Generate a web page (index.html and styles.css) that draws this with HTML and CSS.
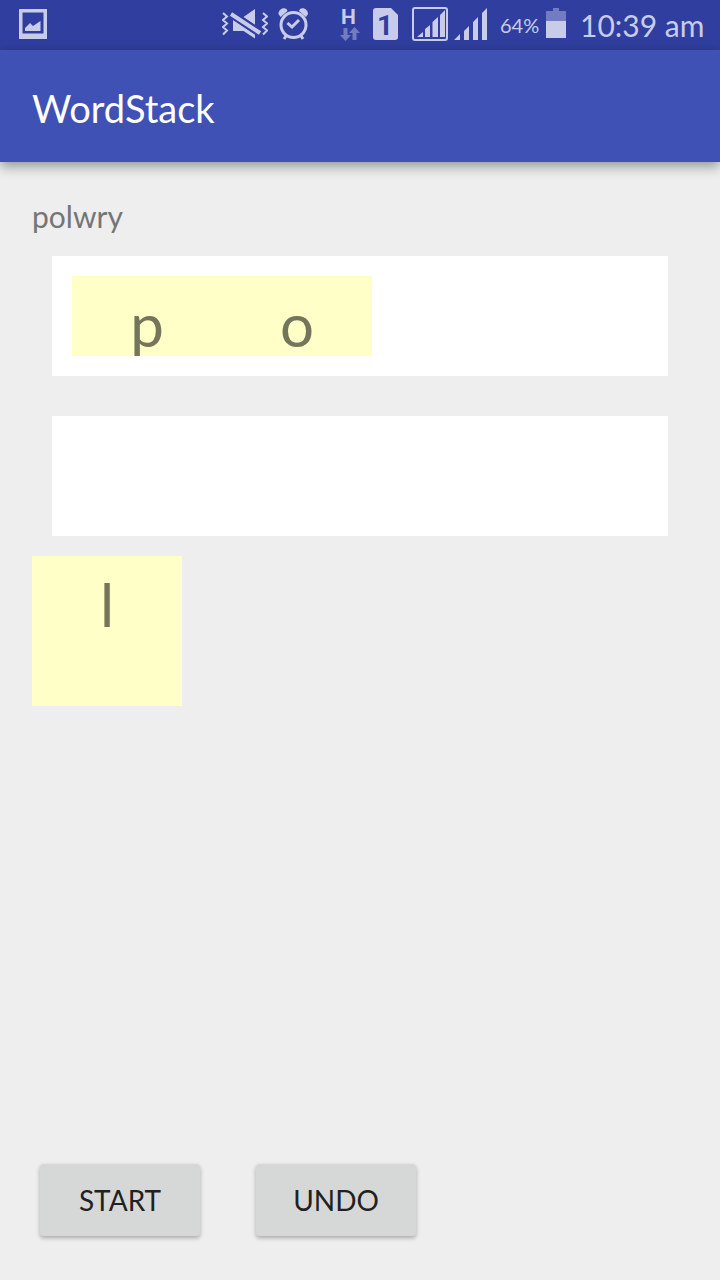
FILE: index.html
```
<!DOCTYPE html>
<html lang="en">
<head>
<meta charset="utf-8">
<meta name="viewport" content="width=device-width, initial-scale=1">
<title>WordStack</title>
<link rel="stylesheet" href="styles.css">
</head>
<body>
<div class="screen">
  <div class="status">
    <svg class="status-icon" width="28" height="50" viewBox="19 0 28 50" aria-hidden="true"><path d="M19 9h28v30H19zM22.500 12.500v21h21v-21z" fill-rule="evenodd"/><path d="M25 31v-3l5-5 3 3 7.500-5v10z"/></svg>
    <div class="status-right">
      <svg class="status-icon mute" width="46" height="50" viewBox="222 0 46 50" aria-hidden="true">
        <path class="line thin" d="M223 13l4 3.500-4 3.500 4 3.500-4 3.500 4 3.500-4 4M263 13l4 3.500-4 3.500 4 3.500-4 3.500 4 3.500-4 4"/>
        <path d="M233 19.500L255 34.500V38.500L243.500 31H233zM243.500 17L255 9v16z"/>
        <path class="line cut" d="M231 14L260 33"/>
        <path class="line thick" d="M231 14L260 33"/>
      </svg>
      <svg class="status-icon alarm" width="30" height="50" viewBox="278 0 30 50" aria-hidden="true">
        <circle class="line" cx="293.500" cy="25" r="12.500"/>
        <path class="line mid" d="M287.500 23l4.500 4 7-7M286 36l-2 3M301 36l2 3"/>
        <path d="M278.500 14c0-4 4-7 8-5l1 2-7 6zM308 14c0-4-4-7-8-5l-1 2 7 6z"/>
      </svg>
      <svg class="status-icon data" width="20" height="50" viewBox="340 0 20 50" aria-hidden="true">
        <text x="348.500" y="24" class="net">H</text>
        <path class="dim" d="M343.500 28h4v7h3.500l-5.500 6-5.500-6h3.500zM352.500 40h4v-7h3.500l-5.500-6-5.500 6h3.500z"/>
      </svg>
      <svg class="status-icon sim" width="25" height="50" viewBox="373 0 25 50" aria-hidden="true"><path d="M376 8h15l7 7v22q0 3-3 3h-19q-3 0-3-3V11q0-3 3-3z"/><text x="385" y="35" class="sim-number">1</text></svg>
      <svg class="status-icon boxed" width="36" height="50" viewBox="412 0 36 50" aria-hidden="true"><rect class="line frame" x="413" y="8" width="34" height="32" rx="2"/><path d="M417 37l6-5v5zM425 37V29l5-4v12zM432.500 37V22l5.500-5v20zM440 37V15l5-5v27z"/></svg>
      <svg class="status-icon signal" width="34" height="50" viewBox="454 0 34 50" aria-hidden="true"><path d="M454 40l6-6v6zM464 40V31l5-5v14zM473 40V22l5-5v23zM482 40V13l5-5v32z"/></svg>
      <span class="percent">64%</span>
      <svg class="status-icon battery" width="20" height="50" viewBox="546 0 20 50" aria-hidden="true"><path class="dim" d="M546 11h7V8h6v3h7v10h-20z"/><path d="M546 21h20v17h-20z"/></svg>
      <time class="clock">10:39 am</time>
    </div>
  </div>
  <header class="bar"><h1 class="title">WordStack</h1></header>
  <main class="game">
    <p class="letters">polwry</p>
    <div class="slot"><span class="tile short">p</span><span class="tile short">o</span></div>
    <div class="slot"></div>
    <div class="stack"><span class="tile">l</span></div>
    <div class="actions">
      <button class="action" type="button">START</button>
      <button class="action" type="button">UNDO</button>
    </div>
  </main>
</div>
</body>
</html>
```
FILE: styles.css
```
* { box-sizing: border-box; }
body {
  margin: 0;
  background: #eeeeee;
  font-family: Lato, "Open Sans", sans-serif;
}
.screen {
  min-height: 100vh;
  display: flex;
  flex-direction: column;
}
.status {
  display: flex;
  justify-content: space-between;
  align-items: center;
  padding: 0 14px 0 19px;
  background: #303f9f;
  color: #c9cce8;
}
.status-right { display: flex; align-items: center; }
.status-icon { display: block; flex: none; fill: #c9cce8; }
.line { fill: none; stroke: #c9cce8; stroke-width: 3; }
.thin { stroke-width: 2; }
.mid { stroke-width: 3; }
.thick { stroke-width: 4; }
.cut { stroke: #303f9f; stroke-width: 8; }
.frame { stroke-width: 2; }
.dim { fill: #727cc0; }
.net { font: bold 21px Roboto, sans-serif; text-anchor: middle; }
.sim-number { font: bold 28px Roboto, sans-serif; text-anchor: middle; fill: #303f9f; }
.mute { margin-right: 10px; }
.alarm { margin-right: 32px; }
.data { margin-right: 13px; }
.sim { margin-right: 14px; }
.boxed { margin-right: 6px; }
.signal { margin-right: 12px; }
.percent { width: 40px; margin-right: 6px; font-size: 20px; white-space: nowrap; }
.battery { margin-right: 14px; }
.clock { width: 126px; font-size: 30px; line-height: 50px; white-space: nowrap; }
.bar {
  display: flex;
  align-items: center;
  height: 112px;
  padding: 4px 32px 0;
  background: #3f51b5;
  color: #ffffff;
  box-shadow: 0 4px 12px rgba(0, 0, 0, 0.4);
}
.title { margin: 0; font-size: 38px; font-weight: 400; line-height: 48px; }
.game {
  flex: 1;
  display: flex;
  flex-direction: column;
  padding: 34px 32px 38px;
}
.letters {
  margin: 0 0 20px;
  color: #757575;
  font-size: 30px;
  line-height: 40px;
}
.slot {
  display: flex;
  height: 120px;
  margin: 0 20px 40px;
  padding: 20px;
  background: #ffffff;
}
.slot + .stack { margin-top: -20px; }
.tile {
  display: block;
  width: 150px;
  height: 150px;
  background: #ffffc8;
  color: #75755c;
  font-size: 60px;
  line-height: 96px;
  text-align: center;
  overflow: hidden;
}
.short { height: 80px; }
.actions { display: flex; gap: 56px; margin-top: auto; padding: 24px 8px 6px; }
.action {
  width: 160px;
  height: 72px;
  border: 0;
  border-radius: 4px;
  background: #d6d8d7;
  color: #212121;
  font-family: inherit;
  font-size: 28px;
  box-shadow: 0 2px 4px rgba(0, 0, 0, 0.3);
}
```
